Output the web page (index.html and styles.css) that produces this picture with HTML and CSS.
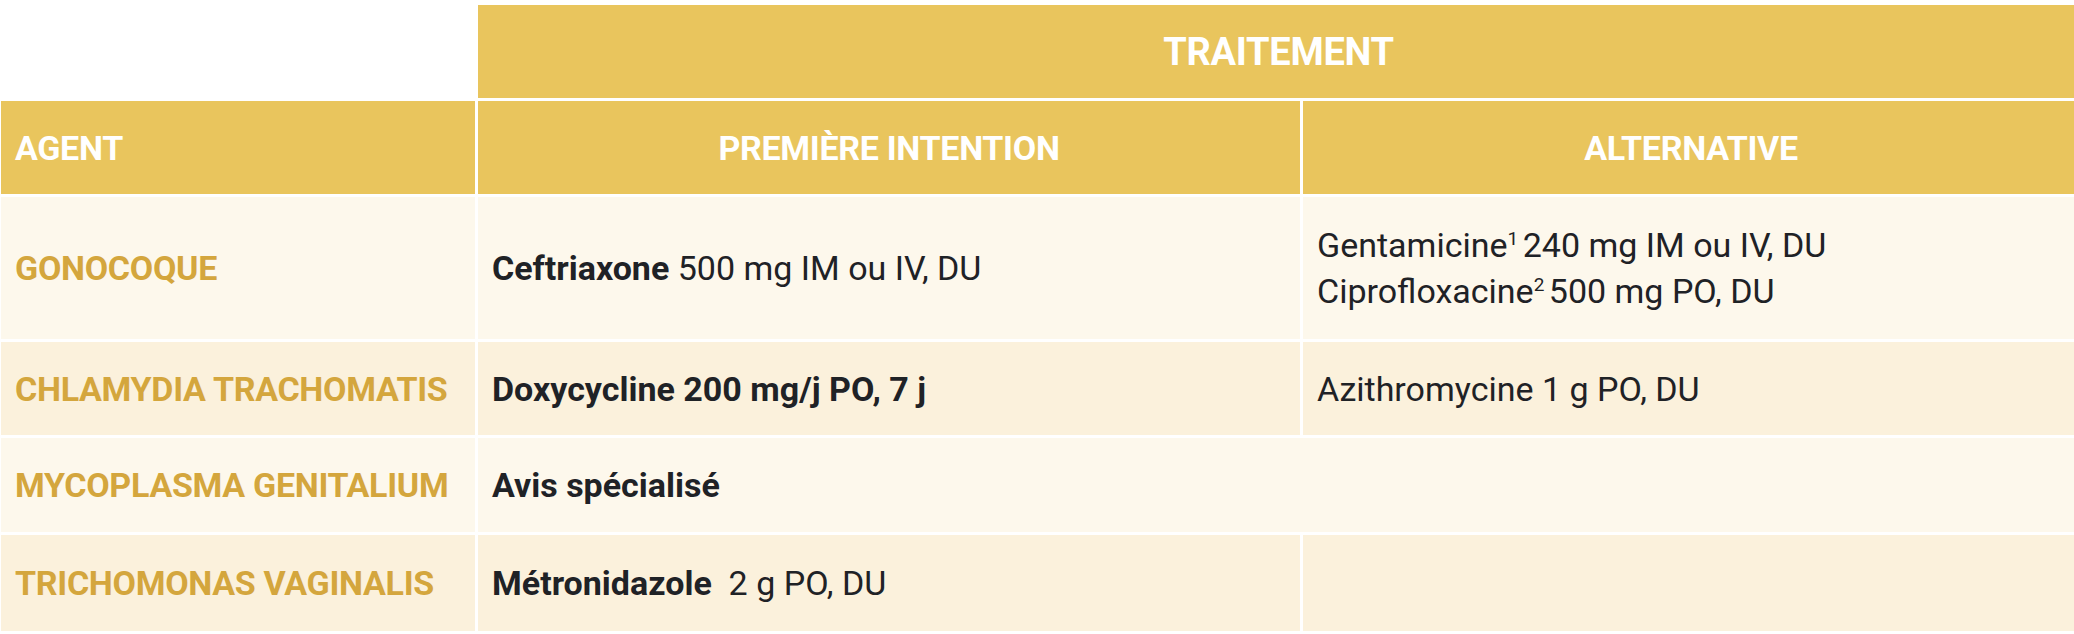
FILE: index.html
```html
<!DOCTYPE html>
<html lang="fr">
<head>
<meta charset="utf-8">
<title>Traitement</title>
<link rel="stylesheet" href="styles.css">
</head>
<body>
<table class="tbl">
  <colgroup>
    <col class="c1">
    <col class="c2">
    <col class="c3">
  </colgroup>
  <thead>
    <tr class="r-top">
      <td class="blank"></td>
      <th class="hd hd-main" colspan="2">TRAITEMENT</th>
    </tr>
    <tr class="r-head">
      <th class="hd hd-left">AGENT</th>
      <th class="hd">PREMIÈRE INTENTION</th>
      <th class="hd">ALTERNATIVE</th>
    </tr>
  </thead>
  <tbody>
    <tr class="r-gono light">
      <td class="agent">GONOCOQUE</td>
      <td class="cell"><b>Ceftriaxone</b> 500 mg IM ou IV, DU</td>
      <td class="cell multi">Gentamicine<sup>1</sup> 240 mg IM ou IV, DU<br>Ciprofloxacine<sup>2</sup> 500 mg PO, DU</td>
    </tr>
    <tr class="r-chla dark">
      <td class="agent">CHLAMYDIA TRACHOMATIS</td>
      <td class="cell"><b>Doxycycline 200 mg/j PO, 7 j</b></td>
      <td class="cell">Azithromycine 1 g PO, DU</td>
    </tr>
    <tr class="r-myco light">
      <td class="agent">MYCOPLASMA GENITALIUM</td>
      <td class="cell" colspan="2"><b>Avis spécialisé</b></td>
    </tr>
    <tr class="r-tric dark">
      <td class="agent">TRICHOMONAS VAGINALIS</td>
      <td class="cell"><b>Métronidazole</b>&nbsp; 2 g PO, DU</td>
      <td class="cell"></td>
    </tr>
  </tbody>
</table>
</body>
</html>
```

FILE: styles.css
```css
html, body {
  margin: 0;
  padding: 0;
  background: #ffffff;
  overflow: hidden;
}

.tbl {
  border-collapse: separate;
  border-spacing: 3px;
  margin: 2px -2px 0 -2px;
  width: 2078px;
  table-layout: fixed;
  font-family: "Roboto", "Liberation Sans", sans-serif;
  font-size: 34px;
  color: #1f2226;
}

.c1 { width: 474px; }
.c2 { width: 822px; }
.c3 { width: 776px; }

.tbl th,
.tbl td {
  padding: 0 14px;
  vertical-align: middle;
  white-space: nowrap;
}

.blank {
  background: transparent;
}

.hd {
  background: #e9c55d;
  color: #ffffff;
  font-weight: 700;
  text-align: center;
  letter-spacing: -0.3px;
}

.hd-main {
  font-size: 38px;
}

.hd-left {
  text-align: left;
  padding-left: 19px;
}

.r-top td,
.r-top th { height: 93px; }
.r-head th { height: 93px; }
.r-gono td { height: 142px; }
.r-chla td { height: 93px; }
.r-myco td { height: 94px; }
.r-tric td { height: 96px; }

.light td { background: #fdf8ec; }
.dark td { background: #fbf1dc; }

.agent {
  color: #d4a63d;
  font-weight: 700;
  letter-spacing: -0.3px;
  padding-left: 19px;
}

.cell b {
  font-weight: 700;
}

.multi {
  line-height: 46px;
}

.cell sup {
  font-size: 19px;
  line-height: 0;
  vertical-align: 12px;
  margin-right: -4px;
}
```
